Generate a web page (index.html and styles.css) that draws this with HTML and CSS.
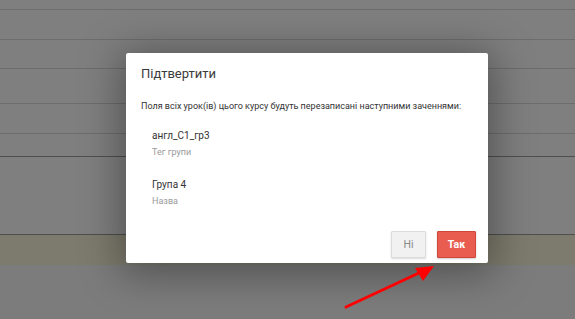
FILE: index.html
```html
<!DOCTYPE html>
<html lang="uk">
  <head>
    <meta charset="UTF-8" />
    <meta name="viewport" content="width=device-width, initial-scale=1.0" />
    <title>Підтвертити</title>
    <link rel="stylesheet" href="styles.css">
  </head>
  <body>
    <!-- page behind the overlay -->
    <div class="page">
      <div class="row" style="height: 9px"></div>
      <div class="row" style="height: 29px"></div>
      <div class="row" style="height: 28px"></div>
      <div class="row" style="height: 34px"></div>
      <div class="row" style="height: 29px"></div>
      <div class="row dark" style="height: 22px"></div>
      <div class="row dark" style="height: 77px"></div>
      <div class="band"></div>
    </div>

    <div class="modal">
      <h2 class="modal-title">Підтвертити</h2>
      <p class="modal-text">
        Поля всіх урок(ів) цього курсу будуть перезаписані наступними заченнями:
      </p>
      <div class="field">
        <div class="field-value">англ_С1_гр3</div>
        <div class="field-label">Тег групи</div>
      </div>
      <div class="field">
        <div class="field-value">Група 4</div>
        <div class="field-label">Назва</div>
      </div>
      <div class="modal-actions">
        <button class="btn btn-no">Ні</button>
        <button class="btn btn-yes">Так</button>
      </div>
    </div>

    <svg class="arrow" width="100" height="50" viewBox="0 0 100 50">
      <line x1="5" y1="45" x2="80" y2="10" stroke="#ff0000" stroke-width="3" stroke-linecap="round" />
      <polygon points="93,4 74,6 82,19" fill="#ff0000" />
    </svg>
  </body>
</html>
```

FILE: styles.css
```css
body {
  margin: 0;
  padding: 0;
  font-family: Roboto, "Liberation Sans", sans-serif;
  background-color: #7c7c7c;
  height: 319px;
  overflow: hidden;
}

.page {
  display: flex;
  flex-direction: column;
  background-color: #7f7f7f;
}

.row {
  border-bottom: 1px solid #6d6d6d;
}

.row.dark {
  border-bottom-color: #4f4f4f;
}

.band {
  height: 30px;
  background-color: #7d7b6d;
}

.modal {
  position: absolute;
  top: 53px;
  left: 126px;
  width: 362px;
  height: 210px;
  box-sizing: border-box;
  padding: 11px 12px 5px 15px;
  background: #ffffff;
  border-radius: 2px;
  box-shadow: 0 5px 40px 6px rgba(0, 0, 0, 0.35);
  display: flex;
  flex-direction: column;
}

.modal-title {
  margin: 0;
  font-size: 13px;
  font-weight: 400;
  line-height: 20px;
  color: #3a3a3a;
}

.modal-text {
  margin: 15px 0 0;
  font-size: 9px;
  line-height: 14px;
  color: #333333;
  white-space: nowrap;
}

.field {
  margin: 16px 0 0 11px;
}

.field + .field {
  margin-top: 19px;
}

.field-value {
  font-size: 10px;
  line-height: 14px;
  color: #333333;
}

.field-label {
  margin-top: 2px;
  font-size: 9px;
  line-height: 14px;
  color: #9a9a9a;
}

.modal-actions {
  margin-top: auto;
  display: flex;
  justify-content: flex-end;
  gap: 11px;
}

.btn {
  height: 27px;
  padding: 0;
  font-family: Roboto, "Liberation Sans", sans-serif;
  font-size: 10.5px;
  border-radius: 1px;
  cursor: pointer;
}

.btn-no {
  width: 35px;
  background-color: #f1f1f1;
  border: 1px solid #dcdcdc;
  color: #8a8a8a;
  box-shadow: 0 1px 2px rgba(0, 0, 0, 0.15);
}

.btn-yes {
  width: 39px;
  background-color: #e95d51;
  border: 1px solid #cf463b;
  color: #ffffff;
  font-weight: 700;
  box-shadow: 0 1px 2px rgba(0, 0, 0, 0.2);
}

.arrow {
  position: absolute;
  left: 341px;
  top: 262px;
}
```
